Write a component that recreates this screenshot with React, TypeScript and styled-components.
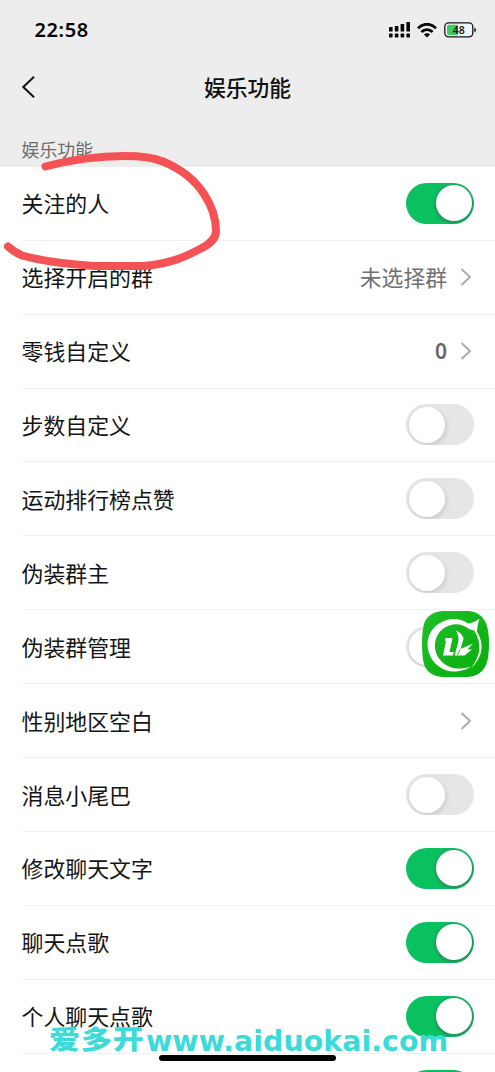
import React from "react";
import styled, { createGlobalStyle } from "styled-components";

const GlobalStyle = createGlobalStyle`
  * { box-sizing: border-box; }
  body {
    margin: 0;
    background: #fff;
    font-family: "Noto Sans CJK SC", sans-serif;
    overflow: hidden;
  }
`;

const Screen = styled.main`
  position: relative;
  width: 495px;
  height: 1072px;
  overflow: hidden;
  background: #fff;
`;

const Header = styled.header`
  height: 166.8px;
  background: #ededed;
`;

const StatusBar = styled.div`
  display: flex;
  align-items: center;
  justify-content: space-between;
  height: 60px;
  padding: 0 18px 0 34.5px;
`;

const Clock = styled.span`
  font: 600 20px/28px "Noto Sans", sans-serif;
  letter-spacing: 0.6px;
  color: #080808;
`;

const StatusIcons = styled.div`
  display: flex;
  align-items: center;
  gap: 7px;
`;

const NavBar = styled.div`
  display: grid;
  grid-template-columns: 60px 1fr 60px;
  align-items: center;
  height: 54px;
`;

const BackButton = styled.button`
  display: flex;
  padding: 0 0 0 21px;
  border: 0;
  background: none;
`;

const Title = styled.h1`
  margin: 0;
  text-align: center;
  font-size: 21.8px;
  line-height: 32px;
  font-weight: 500;
  color: #111;
`;

const SectionLabel = styled.div`
  padding: 22px 0 0 21.5px;
  font-size: 17.9px;
  line-height: 27px;
  color: #6c6c6c;
`;

const Row = styled.div`
  display: flex;
  align-items: center;
  justify-content: space-between;
  height: 73.92px;
  margin-left: 21.5px;
  padding-right: 21px;
  border-bottom: 1px solid #f1f1f1;
`;

const Label = styled.span`
  font-size: 21.9px;
  line-height: 32px;
  color: #141414;
`;

const Detail = styled.span`
  display: flex;
  align-items: center;
  gap: 13px;
  padding-right: 2px;
  font-size: 21.8px;
  line-height: 32px;
  color: #707070;
`;

const Count = styled.span`
  font: 600 21px/32px "Noto Sans", sans-serif;
  color: #666;
`;

const Switch = styled.span<{ $on: boolean }>`
  display: flex;
  align-items: center;
  justify-content: ${(p) => (p.$on ? "flex-end" : "flex-start")};
  width: 68px;
  height: 41px;
  padding: 0 2.5px;
  border-radius: 21px;
  background: ${(p) => (p.$on ? "#0ac160" : "#e6e6e8")};
  overflow: hidden;
`;

const Knob = styled.span<{ $on: boolean }>`
  width: 36px;
  height: 36px;
  border-radius: 50%;
  background: #fff;
  box-shadow: ${(p) => (p.$on ? "0 1px 3px 1px rgba(70, 80, 75, 0.5)" : "1px 2px 5px rgba(0, 0, 0, 0.14)")};
`;

const Annotation = styled.svg`
  position: absolute;
  left: 0;
  top: 145px;
`;

const FloatingBadge = styled.div`
  position: absolute;
  left: 422px;
  top: 611px;
  width: 67px;
  height: 66px;
`;

const Watermark = styled.div`
  position: absolute;
  left: 49px;
  top: 1018px;
  display: flex;
  align-items: baseline;
  white-space: nowrap;
  line-height: 40px;
  color: #3adbd9;
`;

const WatermarkName = styled.span`
  width: 97px;
  font-size: 31px;
  font-weight: 900;
  letter-spacing: 0.9px;
  transform: scaleY(0.86);
`;

const WatermarkUrl = styled.span`
  font: bold 28.5px/40px "DejaVu Sans", sans-serif;
`;

const HomeIndicator = styled.div`
  position: absolute;
  left: 159px;
  top: 1055px;
  width: 177px;
  height: 6px;
  border-radius: 3px;
  background: #000;
`;

type Item = { label: string; on?: boolean; text?: string; count?: string };

const items: Item[] = [
  { label: "关注的人", on: true },
  { label: "选择开启的群", text: "未选择群" },
  { label: "零钱自定义", count: "0" },
  { label: "步数自定义", on: false },
  { label: "运动排行榜点赞", on: false },
  { label: "伪装群主", on: false },
  { label: "伪装群管理", on: false },
  { label: "性别地区空白" },
  { label: "消息小尾巴", on: false },
  { label: "修改聊天文字", on: true },
  { label: "聊天点歌", on: true },
  { label: "个人聊天点歌", on: true },
  { label: "", on: true },
];

const Chevron = () => (
  <svg width="12" height="20" viewBox="0 0 12 20" fill="none" stroke="#a9a9a9" strokeWidth="1.8">
    <path d="M1.5 2 10 10 1.5 18" />
  </svg>
);

const Signal = () => (
  <svg width="21" height="16" viewBox="0 0 21 16" fill="#080808">
    {[5, 4, 2, 0].map((top, i) => (
      <rect key={i} x={i * 5.8} y={top} width="3.6" height={9.5 - top} rx="0.6" />
    ))}
    {[0, 1, 2, 3].map((i) => (
      <rect key={i} x={i * 5.8} y="11.5" width="3.6" height="4" rx="0.8" />
    ))}
  </svg>
);

const Wifi = () => (
  <svg width="20" height="15" viewBox="0 0 20 15" fill="none" stroke="#080808" strokeWidth="2.8">
    <path d="M1 5.2C6-.1 14-.1 19 5.2M4.4 8.9c3.2-3.1 8-3.1 11.2 0" />
    <path d="M10 14.5 6.9 11.5c1.8-1.6 4.4-1.6 6.2 0Z" fill="#080808" stroke="none" />
  </svg>
);

const Battery = () => (
  <svg width="33" height="16" viewBox="0 0 33 16">
    <rect x="0.8" y="0.9" width="28" height="14" rx="3.8" fill="#f4f4f4" stroke="#151515" strokeWidth="1.3" />
    <path d="M5 2.8h8.8v10.4H5a2 2 0 0 1-2-2V4.8a2 2 0 0 1 2-2Z" fill="#3ecb61" />
    <path d="M30.4 5.5q3.4 2.5 0 5Z" fill="#151515" />
    <text x="14.7" y="11.7" textAnchor="middle" fontFamily="Noto Sans, sans-serif" fontSize="10.5" fontWeight="600" fill="#151515">48</text>
  </svg>
);

const control = (item: Item) => {
  if (item.on !== undefined) {
    return (
      <Switch $on={item.on}>
        <Knob $on={item.on} />
      </Switch>
    );
  }
  return (
    <Detail>
      {item.text}
      {item.count && <Count>{item.count}</Count>}
      <Chevron />
    </Detail>
  );
};

export default function App() {
  return (
    <Screen>
      <GlobalStyle />
      <Header>
        <StatusBar>
          <Clock>22:58</Clock>
          <StatusIcons>
            <Signal />
            <Wifi />
            <Battery />
          </StatusIcons>
        </StatusBar>
        <NavBar>
          <BackButton aria-label="返回">
            <svg width="14" height="24" viewBox="0 0 14 24" fill="none" stroke="#111" strokeWidth="2">
              <path d="M13 1.7 2.3 12 13 22.3" />
            </svg>
          </BackButton>
          <Title>娱乐功能</Title>
        </NavBar>
        <SectionLabel>娱乐功能</SectionLabel>
      </Header>
      {items.map((item, i) => (
        <Row key={i}>
          <Label>{item.label}</Label>
          {control(item)}
        </Row>
      ))}
      <Annotation width="225" height="130" viewBox="0 145 225 130" fill="none" stroke="#f45254" strokeWidth="8" strokeLinecap="round" strokeLinejoin="round">
        <path d="M45.5 166.5C73 159 99 156 125 156C141 156 152 157 163 161.5C181 169 195 180 204 194C212 206 216 218 216 231C216 239 210 244 200 249C181 259 166 264.5 143 266H94C72 264.5 45 262 22 255.5C16 253 12 250 8 246.5" />
      </Annotation>
      <FloatingBadge>
        <svg width="67" height="66" viewBox="0 0 67 66">
          <defs>
            <linearGradient id="badge" x1="0" y1="0" x2="1" y2="1">
              <stop offset="0" stopColor="#20c028" />
              <stop offset="1" stopColor="#08ad0b" />
            </linearGradient>
          </defs>
          <path d="M20 0H47Q58 1 63 10Q67 17 67 33T63 56Q58 65 46 66H20Q8 65 3 56Q0 49 0 33T3 10Q8 1 20 0Z" fill="url(#badge)" />
          <path d="M57.5 7.5Q52 12 46 12.5C38 7 27 6.5 18 12C7 18 3 31 7 42C11 54 22 61 33 60.5C41 60 46 58 48.5 55.5C36 60 24 57 17.5 48C10 38 12 24 22 17C30 11.5 40 12 47 18L55 20.5Q55.5 13 57.5 7.5Z" fill="#fff" />
          <path d="M54.5 20C63 33 61 46 49 57.5C59 44 60 33 52.5 20Z" fill="#fff" />
          <path d="M23.5 27H30.500L27.500 41H32L31 44.500H21L24 30H23Z" fill="#fff" />
          <path d="M34 19.500Q41 23 41.500 28L38.500 38L51 32.500L45.500 38.500H50L42.500 44.500H32.500L36.500 30Q37 25 34 19.500Z" fill="#fff" />
          <path d="M35 31 31.500 45M38 38.500 35.500 44" fill="none" stroke="#13b519" strokeWidth="0.9" />
        </svg>
      </FloatingBadge>
      <Watermark>
        <WatermarkName>爱多开</WatermarkName>
        <WatermarkUrl>www.aiduokai.com</WatermarkUrl>
      </Watermark>
      <HomeIndicator />
    </Screen>
  );
}
